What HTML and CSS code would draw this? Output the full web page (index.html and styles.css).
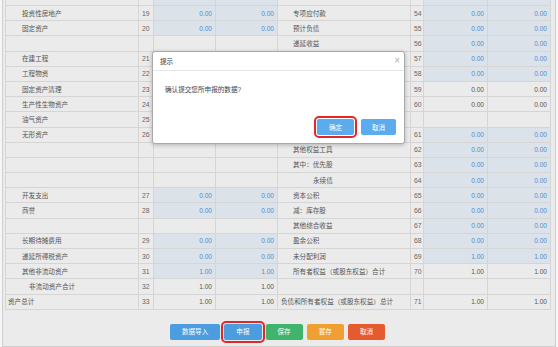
FILE: index.html
```html
<!DOCTYPE html>
<html lang="zh-CN">
<head>
<meta charset="utf-8">
<title>资产负债表</title>
<link rel="stylesheet" href="styles.css">
</head>
<body>
<div class="panel">
  <table class="sheet">
    <colgroup>
      <col class="c-label"><col class="c-no-l"><col class="c-val"><col class="c-val">
      <col class="c-label"><col class="c-no-r"><col class="c-val-r"><col class="c-val-r2">
    </colgroup>
    <tbody>
      <tr><td class="lbl"></td><td class="no"></td><td class="v in"></td><td class="v in"></td><td class="rl"></td><td class="no"></td><td class="v in"></td><td class="v in"></td></tr>
      <tr><td class="lbl">投资性房地产</td><td class="no">19</td><td class="v in">0.00</td><td class="v in">0.00</td><td class="rl">专项应付款</td><td class="no">54</td><td class="v in">0.00</td><td class="v in">0.00</td></tr>
      <tr><td class="lbl">固定资产</td><td class="no">20</td><td class="v in">0.00</td><td class="v in">0.00</td><td class="rl">预计负债</td><td class="no">55</td><td class="v in">0.00</td><td class="v in">0.00</td></tr>
      <tr><td class="lbl"></td><td class="no"></td><td class="v"></td><td class="v"></td><td class="rl">递延收益</td><td class="no">56</td><td class="v in">0.00</td><td class="v in">0.00</td></tr>
      <tr><td class="lbl">在建工程</td><td class="no">21</td><td class="v in">0.00</td><td class="v in">0.00</td><td class="rl">递延所得税负债</td><td class="no">57</td><td class="v in">0.00</td><td class="v in">0.00</td></tr>
      <tr><td class="lbl">工程物资</td><td class="no">22</td><td class="v in">0.00</td><td class="v in">0.00</td><td class="rl">其他非流动负债</td><td class="no">58</td><td class="v in">0.00</td><td class="v in">0.00</td></tr>
      <tr><td class="lbl">固定资产清理</td><td class="no">23</td><td class="v in">0.00</td><td class="v in">0.00</td><td class="rl">非流动负债合计</td><td class="no">59</td><td class="v">0.00</td><td class="v">0.00</td></tr>
      <tr><td class="lbl">生产性生物资产</td><td class="no">24</td><td class="v in">0.00</td><td class="v in">0.00</td><td class="rl">负债合计</td><td class="no">60</td><td class="v">0.00</td><td class="v">0.00</td></tr>
      <tr><td class="lbl">油气资产</td><td class="no">25</td><td class="v in">0.00</td><td class="v in">0.00</td><td class="rl flush">所有者权益（或股东权益）：</td><td class="no"></td><td class="v"></td><td class="v"></td></tr>
      <tr><td class="lbl">无形资产</td><td class="no">26</td><td class="v in">0.00</td><td class="v in">0.00</td><td class="rl">实收资本（或股本）</td><td class="no">61</td><td class="v in">0.00</td><td class="v in">0.00</td></tr>
      <tr><td class="lbl"></td><td class="no"></td><td class="v"></td><td class="v"></td><td class="rl">其他权益工具</td><td class="no">62</td><td class="v in">0.00</td><td class="v in">0.00</td></tr>
      <tr><td class="lbl"></td><td class="no"></td><td class="v"></td><td class="v"></td><td class="rl">其中：优先股</td><td class="no">63</td><td class="v in">0.00</td><td class="v in">0.00</td></tr>
      <tr><td class="lbl"></td><td class="no"></td><td class="v"></td><td class="v"></td><td class="rl deep">永续债</td><td class="no">64</td><td class="v in">0.00</td><td class="v in">0.00</td></tr>
      <tr><td class="lbl">开发支出</td><td class="no">27</td><td class="v in">0.00</td><td class="v in">0.00</td><td class="rl">资本公积</td><td class="no">65</td><td class="v in">0.00</td><td class="v in">0.00</td></tr>
      <tr><td class="lbl">商誉</td><td class="no">28</td><td class="v in">0.00</td><td class="v in">0.00</td><td class="rl">减：库存股</td><td class="no">66</td><td class="v in">0.00</td><td class="v in">0.00</td></tr>
      <tr><td class="lbl"></td><td class="no"></td><td class="v"></td><td class="v"></td><td class="rl">其他综合收益</td><td class="no">67</td><td class="v in">0.00</td><td class="v in">0.00</td></tr>
      <tr><td class="lbl">长期待摊费用</td><td class="no">29</td><td class="v in">0.00</td><td class="v in">0.00</td><td class="rl">盈余公积</td><td class="no">68</td><td class="v in">0.00</td><td class="v in">0.00</td></tr>
      <tr><td class="lbl">递延所得税资产</td><td class="no">30</td><td class="v in">0.00</td><td class="v in">0.00</td><td class="rl">未分配利润</td><td class="no">69</td><td class="v in">1.00</td><td class="v in">1.00</td></tr>
      <tr><td class="lbl">其他非流动资产</td><td class="no">31</td><td class="v in">1.00</td><td class="v in">1.00</td><td class="rl">所有者权益（或股东权益）合计</td><td class="no">70</td><td class="v">1.00</td><td class="v">1.00</td></tr>
      <tr><td class="lbl sub">非流动资产合计</td><td class="no">32</td><td class="v">1.00</td><td class="v">1.00</td><td class="rl"></td><td class="no"></td><td class="v"></td><td class="v"></td></tr>
      <tr><td class="lbl flush">资产总计</td><td class="no">33</td><td class="v">1.00</td><td class="v">1.00</td><td class="rl flush">负债和所有者权益（或股东权益）总计</td><td class="no">71</td><td class="v">1.00</td><td class="v">1.00</td></tr>
    </tbody>
  </table>
  <div class="actions">
    <button class="btn btn-blue">数据导入</button>
    <button class="btn btn-blue marked">申报</button>
    <button class="btn btn-green">保存</button>
    <button class="btn btn-orange">暂存</button>
    <button class="btn btn-red">取消</button>
  </div>
</div>

<div class="dialog">
  <div class="dlg-head">
    <span class="dlg-title">提示</span>
    <span class="dlg-close">×</span>
  </div>
  <div class="dlg-body">确认提交您所申报的数据?</div>
  <div class="dlg-foot">
    <button class="dbtn marked">确定</button>
    <button class="dbtn">取消</button>
  </div>
</div>
</body>
</html>
```

FILE: styles.css
```css
* { box-sizing: border-box; }

html, body {
  margin: 0;
  padding: 0;
}

body {
  width: 558px;
  height: 347px;
  overflow: hidden;
  background: #f6f6f6;
  font-family: "Liberation Sans", "Noto Sans CJK SC", sans-serif;
  font-size: 6.6px;
  color: #555;
  padding-left: 2px;
}

.panel {
  width: 554px;
  background: #ebebeb;
  border: 1px solid #cfcfcf;
  border-top: none;
  padding: 0 0 6px 2px;
}

.sheet {
  table-layout: fixed;
  border-collapse: collapse;
  width: 545px;
  margin-top: -10.2px;
}

.c-label { width: 133px; }
.c-no-l { width: 15px; }
.c-val { width: 62px; }
.c-no-r { width: 13px; }
.c-val-r { width: 64px; }
.c-val-r2 { width: 63px; }

.sheet tr { height: 15.2px; }

.sheet td {
  border: 1px solid #d5d5d5;
  background: #ebebeb;
  padding: 0;
  white-space: nowrap;
  overflow: hidden;
  line-height: 13px;
  vertical-align: middle;
}

.sheet td.lbl { padding-left: 16px; }
.sheet td.lbl.sub { padding-left: 23px; }
.sheet td.lbl.flush { padding-left: 2px; }

.sheet td.rl { padding-left: 15px; }
.sheet td.rl.deep { padding-left: 35px; }
.sheet td.rl.flush { padding-left: 3px; }

.sheet td.no {
  padding-left: 3px;
  color: #666;
  font-size: 6.8px;
}

.sheet td.v {
  text-align: right;
  padding-right: 3px;
  color: #555;
}

.sheet td.v.in {
  background: #dce2ea;
  color: #4a8fd0;
}

.actions {
  display: flex;
  justify-content: center;
  gap: 4px;
  margin-top: 14px;
  width: 545px;
}

.btn {
  height: 16px;
  padding: 0 12px;
  border: none;
  border-radius: 2px;
  font-family: inherit;
  font-size: 6.6px;
  color: #fff;
  line-height: 16px;
}

.btn-blue { background: #4b9ddf; }
.btn-green { background: #40b46c; }
.btn-orange { background: #f0a033; }
.btn-red { background: #e65a2f; }

.marked {
  outline: 2px solid #e3262a;
  outline-offset: 1px;
}

.dialog {
  position: absolute;
  left: 152px;
  top: 51px;
  width: 253px;
  height: 93px;
  background: #fff;
  border: 1px solid #a9a9a9;
  border-radius: 3px;
  box-shadow: 0 1px 4px rgba(0, 0, 0, 0.25);
  display: flex;
  flex-direction: column;
}

.dlg-head {
  height: 19px;
  border-bottom: 1px solid #e6e6e6;
  display: flex;
  align-items: center;
  justify-content: space-between;
  padding: 0 4px 0 7px;
}

.dlg-title { color: #333; }

.dlg-close {
  color: #b0b0b0;
  font-size: 10px;
  line-height: 10px;
}

.dlg-body {
  flex: 1;
  padding: 13px 0 0 12px;
  color: #444;
}

.dlg-foot {
  display: flex;
  justify-content: flex-end;
  gap: 7px;
  padding: 0 8px 8px 0;
}

.dbtn {
  height: 16px;
  width: 37px;
  border: none;
  border-radius: 2px;
  background: #5aacef;
  color: #fff;
  font-family: inherit;
  font-size: 6.6px;
  padding: 0;
}

.dbtn + .dbtn { width: 35px; }
```
